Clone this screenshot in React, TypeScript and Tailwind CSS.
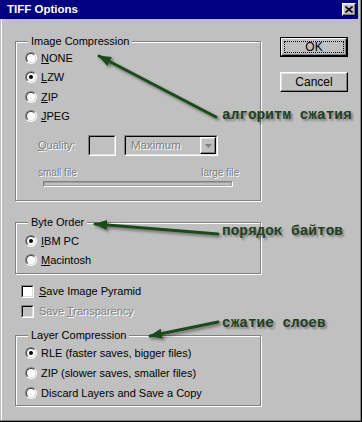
import React from "react";

// classic Win9x dialog bits
const disabledText = "text-[#808080] [text-shadow:1px_1px_0_#fff]";
const sunken =
  "border border-t-[#808080] border-l-[#808080] border-b-white border-r-white";
const sunkenInner =
  "border border-t-black border-l-black border-b-[#dfdfdf] border-r-[#dfdfdf]";
const raised =
  "border border-t-white border-l-white border-b-black border-r-black shadow-[inset_-1px_-1px_0_#808080,inset_1px_1px_0_#dfdfdf]";

const Radio = ({ checked }: { checked?: boolean }) => (
  <span className="flex h-[12px] w-[12px] shrink-0 rounded-full border border-t-[#808080] border-l-[#808080] border-b-white border-r-white">
    <span className="flex h-full w-full items-center justify-center rounded-full border border-t-[#404040] border-l-[#404040] border-b-[#dfdfdf] border-r-[#dfdfdf] bg-white">
      {checked && <span className="h-[4px] w-[4px] rounded-full bg-black" />}
    </span>
  </span>
);

const Checkbox = ({ disabled }: { disabled?: boolean }) => (
  <span className={`flex h-[13px] w-[13px] shrink-0 ${sunken}`}>
    <span
      className={`h-full w-full ${sunkenInner} ${disabled ? "bg-[#c0c0c0]" : "bg-white"}`}
    />
  </span>
);

const RadioRow = ({
  checked,
  h = "h-[19.5px]",
  children,
}: {
  checked?: boolean;
  h?: string;
  children: React.ReactNode;
}) => (
  <div className={`flex ${h} items-center pl-[9px]`}>
    <Radio checked={checked} />
    <span className="ml-[4px] whitespace-nowrap">{children}</span>
  </div>
);

const Group = ({
  title,
  className,
  children,
}: {
  title: string;
  className?: string;
  children: React.ReactNode;
}) => (
  <fieldset
    className={`w-[246px] border border-[#808080] shadow-[1px_1px_0_#fff,inset_1px_1px_0_#fff] ${className ?? ""}`}
  >
    <legend className="ml-[12px] bg-[#c0c0c0] px-[3px] leading-[14px]">
      {title}
    </legend>
    {children}
  </fieldset>
);

export default function App() {
  return (
    <div className="relative h-[422px] w-[362px] overflow-hidden border-b border-r border-black bg-[#c0c0c0] font-['Liberation_Sans',Arial,sans-serif] text-[11px] text-black">
      <div className="flex h-full flex-col border-b border-r border-[#808080] pr-[2px]">
        {/* title bar */}
        <div className="flex h-[19px] shrink-0 items-center bg-[#000080] pl-[7px] pr-[2px]">
          <span className="text-[11.5px] font-bold text-white">TIFF Options</span>
          <div
            className={`ml-auto flex h-[13px] w-[14px] items-center justify-center bg-[#c0c0c0] ${raised}`}
          >
            <svg width="8" height="7" viewBox="0 0 8 7">
              <path d="M0.5 0.5 L7.5 6.5 M7.5 0.5 L0.5 6.5" stroke="#000" strokeWidth="1.6" />
            </svg>
          </div>
        </div>

        {/* body */}
        <div className="ml-[1px] flex flex-1 border-l border-white pt-[15px] pl-[13px]">
          <div className="flex w-[247px] flex-col">
            <Group title="Image Compression" className="pb-[13px]">
              <RadioRow>
                <u>N</u>ONE
              </RadioRow>
              <RadioRow checked>
                <u>L</u>ZW
              </RadioRow>
              <RadioRow>
                <u>Z</u>IP
              </RadioRow>
              <RadioRow>
                <u>J</u>PEG
              </RadioRow>

              <div className="mt-[9px] flex h-[21px] items-center pl-[22px]">
                <span className={`w-[50px] ${disabledText}`}>
                  <u>Q</u>uality:
                </span>
                <div className={`h-[21px] w-[28px] ${sunken}`}>
                  <div className={`h-full w-full ${sunkenInner}`} />
                </div>
                <div className={`ml-[8px] h-[21px] w-[94px] ${sunken}`}>
                  <div className={`flex h-full w-full items-center ${sunkenInner}`}>
                    <span className={`flex-1 pl-[5px] text-[11.5px] ${disabledText}`}>
                      Maximum
                    </span>
                    <div className={`flex h-[17px] w-[16px] items-center justify-center ${raised}`}>
                      <svg width="7" height="4" viewBox="0 0 7 4">
                        <path d="M0 0 H7 L3.5 4 Z" fill="#808080" />
                      </svg>
                    </div>
                  </div>
                </div>
              </div>

              <div
                className={`ml-[22px] mt-[11px] flex h-[12px] w-[201px] justify-between text-[10px] leading-[12px] ${disabledText}`}
              >
                <span>small file</span>
                <span>large file</span>
              </div>
              <div className={`ml-[27px] mt-[2px] h-[6px] w-[190px] ${sunken}`}>
                <div className="h-full w-full border border-[#a0a0a0]" />
              </div>
            </Group>

            <Group title="Byte Order" className="mt-[14px] pb-[3px] pt-[2px]">
              <RadioRow checked>
                <u>I</u>BM PC
              </RadioRow>
              <RadioRow>
                <u>M</u>acintosh
              </RadioRow>
            </Group>

            <div className="mt-[7px] flex h-[20px] items-center pl-[6px]">
              <Checkbox />
              <span className="ml-[5px]">
                <u>S</u>ave Image Pyramid
              </span>
            </div>
            <div className="flex h-[20px] items-center pl-[6px]">
              <Checkbox disabled />
              <span className={`ml-[5px] ${disabledText}`}>
                Save <u>T</u>ransparency
              </span>
            </div>

            <Group title="Layer Compression" className="mt-[7px] pb-[2px] pt-[1px]">
              <RadioRow checked h="h-[20px]">
                RLE (faster saves, bigger files)
              </RadioRow>
              <RadioRow h="h-[20px]">ZIP (slower saves, smaller files)</RadioRow>
              <RadioRow h="h-[20px]">Discard Layers and Save a Copy</RadioRow>
            </Group>
          </div>

          {/* buttons */}
          <div className="ml-[18px] mt-[3px] flex w-[68px] flex-col gap-[15px]">
            <div className="h-[20px] w-[68px] border border-black">
              <div className="flex h-full w-full border border-t-white border-l-white border-b-black border-r-black p-[2px] shadow-[inset_-1px_-1px_0_#808080]">
                <div className="flex flex-1 items-center justify-center border border-dotted border-black text-[12px]">
                  OK
                </div>
              </div>
            </div>
            <div
              className={`flex h-[20px] w-[68px] items-center justify-center text-[12px] ${raised}`}
            >
              Cancel
            </div>
          </div>
        </div>
      </div>

      {/* green annotations */}
      <svg
        className="pointer-events-none absolute left-0 top-0"
        width="362"
        height="422"
        viewBox="0 0 362 422"
      >
        <defs>
          <filter id="sh" x="-20%" y="-50%" width="140%" height="200%">
            <feGaussianBlur in="SourceAlpha" stdDeviation="1.4" />
            <feOffset dx="2" dy="2" result="b" />
            <feComponentTransfer>
              <feFuncA type="linear" slope="0.45" />
            </feComponentTransfer>
            <feMerge>
              <feMergeNode />
              <feMergeNode in="SourceGraphic" />
            </feMerge>
          </filter>
          <marker
            id="head"
            markerUnits="userSpaceOnUse"
            markerWidth="14"
            markerHeight="10"
            refX="12"
            refY="5"
            orient="auto"
          >
            <path d="M0 0 L13 5 L0 10 Z" fill="#1c4a1c" />
          </marker>
        </defs>
        <g filter="url(#sh)" stroke="#1c4a1c" strokeWidth="3" strokeLinecap="round">
          <line x1="216" y1="117" x2="99" y2="56" markerEnd="url(#head)" />
          <line x1="218" y1="234" x2="95" y2="224" markerEnd="url(#head)" />
          <line x1="218" y1="322" x2="150" y2="336" markerEnd="url(#head)" />
        </g>
      </svg>
      <div className="pointer-events-none absolute left-[222px] top-[107px] font-['Liberation_Mono','Courier_New',monospace] text-[14.4px] font-bold leading-[16px] text-[#1f3f1f] [text-shadow:2px_2px_2px_rgba(0,0,0,0.35)]">
        алгоритм сжатия
      </div>
      <div className="pointer-events-none absolute left-[222px] top-[223px] font-['Liberation_Mono','Courier_New',monospace] text-[14.4px] font-bold leading-[16px] text-[#1f3f1f] [text-shadow:2px_2px_2px_rgba(0,0,0,0.35)]">
        порядок байтов
      </div>
      <div className="pointer-events-none absolute left-[222px] top-[315px] font-['Liberation_Mono','Courier_New',monospace] text-[14.4px] font-bold leading-[16px] text-[#1f3f1f] [text-shadow:2px_2px_2px_rgba(0,0,0,0.35)]">
        сжатие слоев
      </div>
    </div>
  );
}
